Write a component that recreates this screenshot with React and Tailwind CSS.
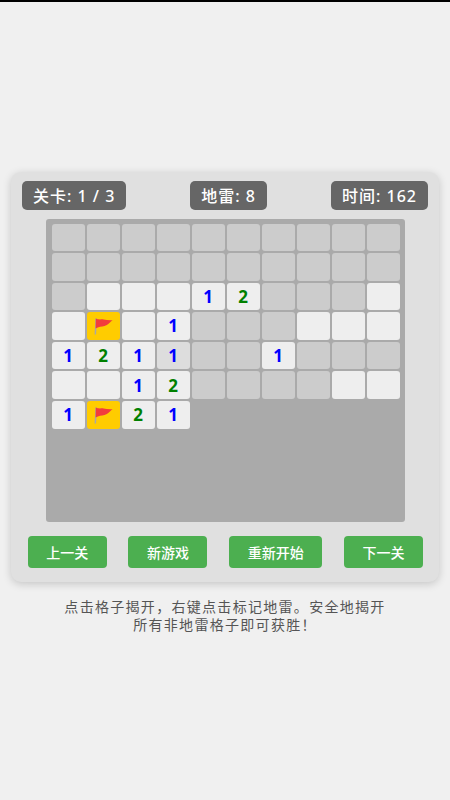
import React from 'react';

const FONT = "font-['Noto_Sans','Noto_Sans_CJK_SC',sans-serif]";

// h = hidden, o = open, f = flag, x = hovered cell, digits = open with number
const rows = [
  ['h', 'h', 'h', 'h', 'h', 'h', 'h', 'h', 'h', 'h'],
  ['h', 'h', 'h', 'h', 'h', 'h', 'h', 'h', 'h', 'h'],
  ['h', 'o', 'o', 'o', '1', '2', 'h', 'h', 'h', 'o'],
  ['o', 'f', 'o', '1', 'h', 'h', 'h', 'o', 'o', 'o'],
  ['1', '2', '1', 'x', 'h', 'h', '1', 'h', 'h', 'h'],
  ['o', 'o', '1', '2', 'h', 'h', 'h', 'h', 'o', 'o'],
  ['1', 'f', '2', '1'],
];

const Flag = () => (
  <svg width="20" height="18" viewBox="0 0 20 18">
    <path d="M2.4 1.5 L1.6 17.5 L3 17.5 L4 1.5 Z" fill="#a8a8a8" />
    <path d="M2.8 1.6 C6 3 8 2.2 10.5 2.4 C13.5 2.6 16.5 3.6 19.6 3 C17 5 15 8 11.5 9 C8.6 9.8 5.6 9.4 2.6 11.6 Z" fill="#f23c3c" />
  </svg>
);

const Cell = ({ value }) => {
  if (value === 'h') return <div className="rounded-[3px] bg-[#cccccc]" />;
  if (value === 'f') {
    return (
      <div className="flex items-center justify-center rounded-[3px] bg-[#ffcc00]">
        <Flag />
      </div>
    );
  }
  const num = value === 'x' ? '1' : value;
  return (
    <div className={`flex items-center justify-center rounded-[3px] text-[17px] font-bold ${value === 'x' ? 'bg-[#dddddd]' : 'bg-[#eeeeee]'} ${num === '1' ? 'text-[#0000ff]' : 'text-[#008000]'}`}>
      {num !== 'o' && num}
    </div>
  );
};

const Stat = ({ children }) => (
  <div className="flex h-[29px] items-center rounded-[5px] bg-[#666666] px-[11px] text-[16px] font-medium tracking-[1px] text-white">{children}</div>
);

const GameButton = ({ children }) => (
  <button className="h-[32px] rounded-[4px] bg-[#4caf50] px-[18.5px] text-[14px] font-medium text-white">{children}</button>
);

const App = () => {
  return (
    <div className={`flex min-h-[800px] flex-col items-center justify-center border-t-2 border-black bg-[#f0f0f0] pt-[4px] ${FONT}`}>
      <div className="w-[428px] rounded-[10px] bg-[#e0e0e0] px-[11px] pt-[9px] pb-[14px] shadow-[0_2px_8px_rgba(0,0,0,0.18)]">
        <div className="flex justify-between">
          <Stat>关卡: 1 / 3</Stat>
          <Stat>地雷: 8</Stat>
          <Stat>时间: 162</Stat>
        </div>
        <div className="mt-[9px] ml-[24px] grid h-[303px] w-[359px] grid-cols-[repeat(10,33px)] auto-rows-[27.6px] content-start justify-center gap-[2px] rounded-[3px] bg-[#aaaaaa] pt-[4.5px]">
          {rows.flat().map((value, i) => (
            <Cell key={i} value={value} />
          ))}
        </div>
        <div className="mt-[14px] flex justify-between pr-[5px] pl-[5.7px]">
          <GameButton>上一关</GameButton>
          <GameButton>新游戏</GameButton>
          <GameButton>重新开始</GameButton>
          <GameButton>下一关</GameButton>
        </div>
      </div>
      <p className="mt-[16px] w-[340px] text-center text-[14px] leading-[18px] tracking-[1.3px] text-[#555555]">
        {'点击格子揭开\uFF0C右键点击标记地雷。安全地揭开'}
        <br />
        {'所有非地雷格子即可获胜\uFF01'}
      </p>
    </div>
  );
};

export default App;
